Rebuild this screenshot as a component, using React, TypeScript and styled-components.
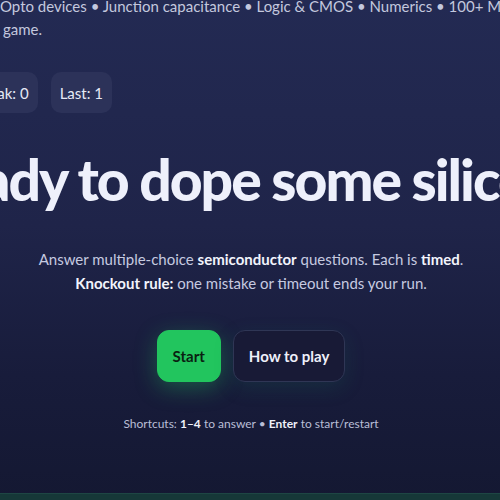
import styled, { createGlobalStyle } from "styled-components";

const GlobalStyle = createGlobalStyle`
    html, body {
        margin: 0;
        padding: 0;
        background: #181c3a;
        overflow: hidden;
    }
`;

const Screen = styled.div`
    width: 500px;
    height: 500px;
    overflow: hidden;
    display: flex;
    flex-direction: column;
    background: linear-gradient(180deg, #232a53 0%, #1f2449 45%, #181c3b 75%, #141832 100%);
    font-family: Lato, "Noto Sans", sans-serif;
    color: #eef0fa;
`;

const Intro = styled.div`
    margin-top: -5px;
    padding-left: 3px;
    font-size: 15px;
    line-height: 23px;
    color: #c3c8de;
    white-space: nowrap;
`;

const IntroLine = styled.div<{ $indent?: number }>`
    margin-left: ${(p) => p.$indent ?? 0}px;
`;

const StatRow = styled.div`
    display: flex;
    gap: 13px;
    margin: 31px 0 0 -38px;
`;

const StatPill = styled.div`
    height: 41px;
    padding: 0 9px;
    display: flex;
    align-items: center;
    border-radius: 10px;
    background: #2c3259;
    color: #e6e9f5;
    font-size: 15px;
    white-space: nowrap;
`;

const Hero = styled.section`
    width: 800px;
    margin-left: -149px;
    display: flex;
    flex-direction: column;
    align-items: center;
    text-align: center;
`;

const Title = styled.h1`
    margin: 32px 0 0;
    font-size: 57px;
    line-height: 68px;
    font-weight: 900;
    letter-spacing: -2px;
    color: #eef0fb;
    white-space: nowrap;
`;

const Lead = styled.p`
    margin: 34px 0 0;
    font-size: 15px;
    line-height: 24px;
    color: #c6cae0;

    b {
        color: #f2f4fc;
        font-weight: 700;
    }
`;

const Actions = styled.div`
    display: flex;
    gap: 12px;
    margin-top: 35px;
`;

const Button = styled.button<{ $primary?: boolean }>`
    height: 52px;
    padding: 0 15px;
    border-radius: 12px;
    font-family: inherit;
    font-size: 15px;
    font-weight: 700;
    cursor: pointer;
    border: 1px solid ${(p) => (p.$primary ? "#22c55e" : "#2f3655")};
    background: ${(p) => (p.$primary ? "#22c55e" : "#181a36")};
    color: ${(p) => (p.$primary ? "#0a1f12" : "#eef0fa")};
    box-shadow: ${(p) =>
        p.$primary
            ? "0 6px 22px rgba(34, 197, 94, 0.35)"
            : "0 6px 20px rgba(20, 120, 90, 0.18)"};
`;

const Shortcuts = styled.p`
    margin: 34px 0 0;
    font-size: 12px;
    color: #b9bed6;

    b {
        color: #eef0fa;
        font-weight: 700;
    }
`;

const FooterEdge = styled.div`
    margin-top: auto;
    height: 6px;
    background: #163838;
    border-top: 1px solid #1e4644;
`;

export default function App() {
    return (
        <>
            <GlobalStyle />
            <Screen>
                <Intro>
                    <IntroLine $indent={-3}>
                        Opto devices • Junction capacitance • Logic &amp; CMOS • Numerics • 100+ MCQs in a
                    </IntroLine>
                    <IntroLine>game.</IntroLine>
                </Intro>
                <StatRow>
                    <StatPill>Streak: 0</StatPill>
                    <StatPill>Last: 1</StatPill>
                </StatRow>
                <Hero>
                    <Title>Ready to dope some silicon?</Title>
                    <Lead>
                        Answer multiple-choice <b>semiconductor</b> questions. Each is <b>timed</b>.
                        <br />
                        <b>Knockout rule:</b> one mistake or timeout ends your run.
                    </Lead>
                    <Actions>
                        <Button $primary>Start</Button>
                        <Button>How to play</Button>
                    </Actions>
                    <Shortcuts>
                        Shortcuts: <b>1–4</b> to answer • <b>Enter</b> to start/restart
                    </Shortcuts>
                </Hero>
                <FooterEdge />
            </Screen>
        </>
    );
}
